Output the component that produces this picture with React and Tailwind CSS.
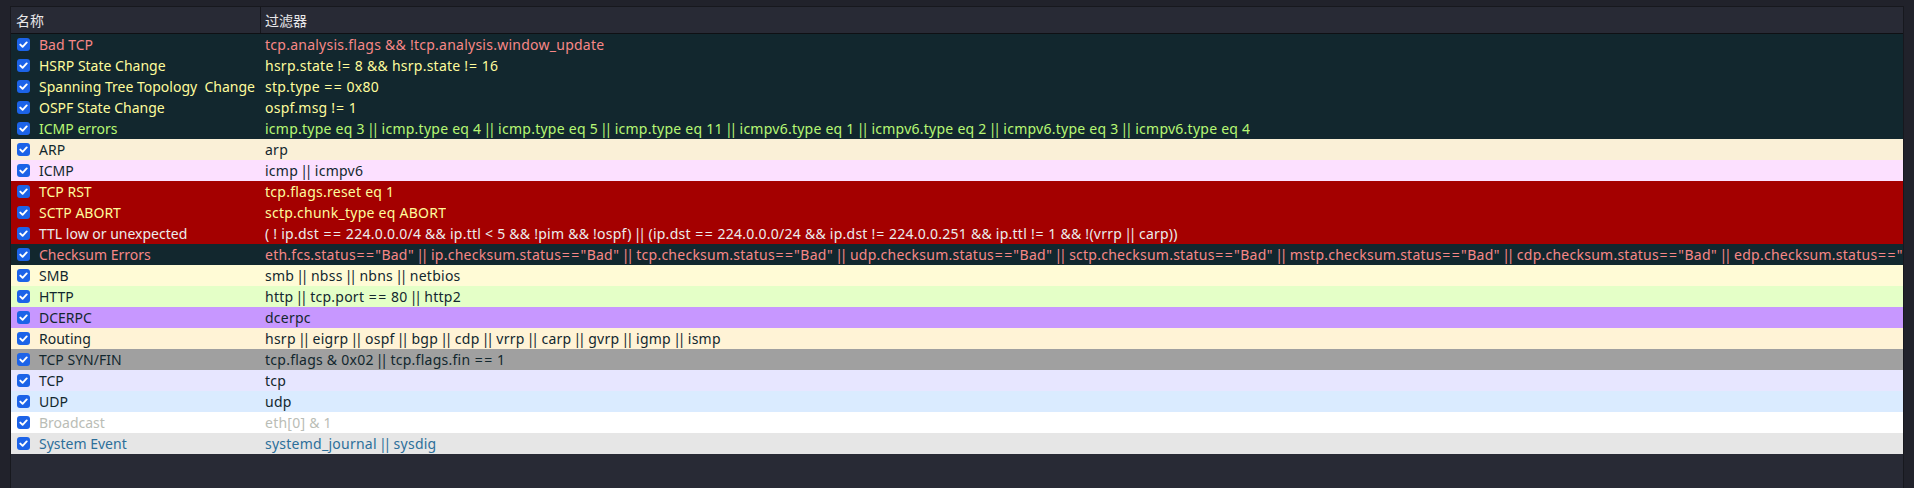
import React from "react";

const DARK = "bg-[#12272e]";

const rules = [
    { name: "Bad TCP", filter: "tcp.analysis.flags && !tcp.analysis.window_update", bg: DARK, fg: "text-[#f78787]" },
    { name: "HSRP State Change", filter: "hsrp.state != 8 && hsrp.state != 16", bg: DARK, fg: "text-[#fffc9c]" },
    { name: "Spanning Tree Topology  Change", filter: "stp.type == 0x80", bg: DARK, fg: "text-[#fffc9c]" },
    { name: "OSPF State Change", filter: "ospf.msg != 1", bg: DARK, fg: "text-[#fffc9c]" },
    {
        name: "ICMP errors",
        filter: "icmp.type eq 3 || icmp.type eq 4 || icmp.type eq 5 || icmp.type eq 11 || icmpv6.type eq 1 || icmpv6.type eq 2 || icmpv6.type eq 3 || icmpv6.type eq 4",
        bg: DARK,
        fg: "text-[#b7f774]",
    },
    { name: "ARP", filter: "arp", bg: "bg-[#faf0d7]", fg: "text-[#12272e]" },
    { name: "ICMP", filter: "icmp || icmpv6", bg: "bg-[#fce0ff]", fg: "text-[#12272e]" },
    { name: "TCP RST", filter: "tcp.flags.reset eq 1", bg: "bg-[#a40000]", fg: "text-[#fffc9c]" },
    { name: "SCTP ABORT", filter: "sctp.chunk_type eq ABORT", bg: "bg-[#a40000]", fg: "text-[#fffc9c]" },
    {
        name: "TTL low or unexpected",
        filter: "( ! ip.dst == 224.0.0.0/4 && ip.ttl < 5 && !pim && !ospf) || (ip.dst == 224.0.0.0/24 && ip.dst != 224.0.0.251 && ip.ttl != 1 && !(vrrp || carp))",
        bg: "bg-[#a40000]",
        fg: "text-[#ececec]",
    },
    {
        name: "Checksum Errors",
        filter: 'eth.fcs.status=="Bad" || ip.checksum.status=="Bad" || tcp.checksum.status=="Bad" || udp.checksum.status=="Bad" || sctp.checksum.status=="Bad" || mstp.checksum.status=="Bad" || cdp.checksum.status=="Bad" || edp.checksum.status=="Bad" || wlan.fcs.status=="Bad" || stt.checksum.status=="Bad"',
        bg: DARK,
        fg: "text-[#f78787]",
    },
    { name: "SMB", filter: "smb || nbss || nbns || netbios", bg: "bg-[#fffbd6]", fg: "text-[#12272e]" },
    { name: "HTTP", filter: "http || tcp.port == 80 || http2", bg: "bg-[#e4ffc7]", fg: "text-[#12272e]" },
    { name: "DCERPC", filter: "dcerpc", bg: "bg-[#c797ff]", fg: "text-[#12272e]" },
    { name: "Routing", filter: "hsrp || eigrp || ospf || bgp || cdp || vrrp || carp || gvrp || igmp || ismp", bg: "bg-[#fff3d6]", fg: "text-[#12272e]" },
    { name: "TCP SYN/FIN", filter: "tcp.flags & 0x02 || tcp.flags.fin == 1", bg: "bg-[#a0a0a0]", fg: "text-[#12272e]" },
    { name: "TCP", filter: "tcp", bg: "bg-[#e7e6ff]", fg: "text-[#12272e]" },
    { name: "UDP", filter: "udp", bg: "bg-[#daebff]", fg: "text-[#12272e]" },
    { name: "Broadcast", filter: "eth[0] & 1", bg: "bg-white", fg: "text-[#babdb6]" },
    { name: "System Event", filter: "systemd_journal || sysdig", bg: "bg-[#e6e6e6]", fg: "text-[#2d6f9a]" },
];

// the UI font draws "|" narrower and "=" / quotes a bit wider than Noto Sans
function FilterText({ text }) {
    const parts = text.split(/([|="])/);
    return parts.map((p, i) => {
        if (p === "|")
            return (
                <span key={i} className="inline-flex justify-center w-[4.5px]">
                    |
                </span>
            );
        if (p === "=")
            return (
                <span key={i} className="inline-flex justify-center w-[9.5px]">
                    =
                </span>
            );
        if (p === '"')
            return (
                <span key={i} className="inline-flex justify-center w-[6.5px]">
                    "
                </span>
            );
        return <span key={i}>{p}</span>;
    });
}

function Check() {
    return (
        <span className="w-[13px] h-[13px] shrink-0 rounded-[3px] bg-[#1c63e8] flex items-center justify-center">
            <svg width="9" height="9" viewBox="0 0 9 9" fill="none">
                <path d="M1.3 4.6 L3.6 6.8 L7.7 2.4" stroke="white" strokeWidth="1.9" strokeLinecap="round" strokeLinejoin="round" />
            </svg>
        </span>
    );
}

export default function App() {
    return (
        <div
            className="w-[1914px] h-[488px] bg-[#21222b] pt-[6px] px-[10px] overflow-hidden text-[14px]"
            style={{ fontFamily: '"Noto Sans", "Noto Sans CJK SC", sans-serif' }}
        >
            <div className="h-[500px] bg-[#282a35] border border-[#17181e] overflow-hidden">
                {/* header */}
                <div className="flex h-[27px] border-b border-[#0f1014] text-[#e8e8ea]">
                    <div className="w-[250px] pl-[5px] flex items-center border-r border-[#15161c]">名称</div>
                    <div className="pl-[4px] flex items-center">过滤器</div>
                </div>

                {/* rows */}
                {rules.map((r) => (
                    <div key={r.name} className={`flex h-[21px] items-center ${r.bg} ${r.fg}`}>
                        <div className="w-[250px] shrink-0 pl-[6px] flex items-center gap-[9px]">
                            <Check />
                            <span className="whitespace-pre">{r.name}</span>
                        </div>
                        <div className="pl-[4px] whitespace-pre overflow-hidden tracking-[0.25px]">
                            <FilterText text={r.filter} />
                        </div>
                    </div>
                ))}
            </div>
        </div>
    );
}
